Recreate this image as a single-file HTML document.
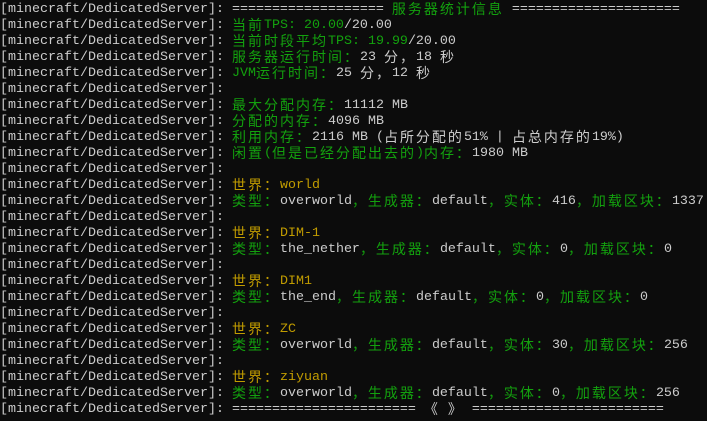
<!DOCTYPE html>
<html><head><meta charset="utf-8"><style>
html,body{margin:0;padding:0;background:#0c0c0c;width:707px;height:421px;overflow:hidden}
body{padding-top:2px;box-sizing:border-box;color:#cccccc;font-family:"Liberation Mono",monospace;font-size:13.333px;line-height:16px}
div{white-space:pre;height:16px;line-height:16px;overflow:visible}
b{font-weight:normal}
.g{color:#13a10e}.y{color:#c19c00}
i{font-style:normal;font-family:"Noto Sans CJK SC","WenQuanYi Zen Hei",sans-serif;font-size:14px;letter-spacing:2px;line-height:16px;display:inline-block;height:16px;vertical-align:top;position:relative;top:-1px}
</style></head><body>
<div>[minecraft/DedicatedServer]: =================== <b class="g"><i>服务器统计信息</i></b> =====================</div>
<div>[minecraft/DedicatedServer]: <b class="g"><i>当前</i>TPS: 20.00</b>/20.00</div>
<div>[minecraft/DedicatedServer]: <b class="g"><i>当前时段平均</i>TPS: 19.99</b>/20.00</div>
<div>[minecraft/DedicatedServer]: <b class="g"><i>服务器运行时间：</i></b>23 <i>分，</i>18 <i>秒</i></div>
<div>[minecraft/DedicatedServer]: <b class="g">JVM<i>运行时间：</i></b>25 <i>分，</i>12 <i>秒</i></div>
<div>[minecraft/DedicatedServer]:</div>
<div>[minecraft/DedicatedServer]: <b class="g"><i>最大分配内存：</i></b>11112 MB</div>
<div>[minecraft/DedicatedServer]: <b class="g"><i>分配的内存：</i></b>4096 MB</div>
<div>[minecraft/DedicatedServer]: <b class="g"><i>利用内存：</i></b>2116 MB (<i>占所分配的</i>51% | <i>占总内存的</i>19%)</div>
<div>[minecraft/DedicatedServer]: <b class="g"><i>闲置</i>(<i>但是已经分配出去的</i>)<i>内存：</i></b>1980 MB</div>
<div>[minecraft/DedicatedServer]:</div>
<div>[minecraft/DedicatedServer]: <b class="y"><i>世界：</i>world</b></div>
<div>[minecraft/DedicatedServer]: <b class="g"><i>类型：</i></b>overworld<b class="g"><i>，生成器：</i></b>default<b class="g"><i>，实体：</i></b>416<b class="g"><i>，加载区块：</i></b>1337</div>
<div>[minecraft/DedicatedServer]:</div>
<div>[minecraft/DedicatedServer]: <b class="y"><i>世界：</i>DIM-1</b></div>
<div>[minecraft/DedicatedServer]: <b class="g"><i>类型：</i></b>the_nether<b class="g"><i>，生成器：</i></b>default<b class="g"><i>，实体：</i></b>0<b class="g"><i>，加载区块：</i></b>0</div>
<div>[minecraft/DedicatedServer]:</div>
<div>[minecraft/DedicatedServer]: <b class="y"><i>世界：</i>DIM1</b></div>
<div>[minecraft/DedicatedServer]: <b class="g"><i>类型：</i></b>the_end<b class="g"><i>，生成器：</i></b>default<b class="g"><i>，实体：</i></b>0<b class="g"><i>，加载区块：</i></b>0</div>
<div>[minecraft/DedicatedServer]:</div>
<div>[minecraft/DedicatedServer]: <b class="y"><i>世界：</i>ZC</b></div>
<div>[minecraft/DedicatedServer]: <b class="g"><i>类型：</i></b>overworld<b class="g"><i>，生成器：</i></b>default<b class="g"><i>，实体：</i></b>30<b class="g"><i>，加载区块：</i></b>256</div>
<div>[minecraft/DedicatedServer]:</div>
<div>[minecraft/DedicatedServer]: <b class="y"><i>世界：</i>ziyuan</b></div>
<div>[minecraft/DedicatedServer]: <b class="g"><i>类型：</i></b>overworld<b class="g"><i>，生成器：</i></b>default<b class="g"><i>，实体：</i></b>0<b class="g"><i>，加载区块：</i></b>256</div>
<div>[minecraft/DedicatedServer]: ======================= <i>《</i> <i>》</i> ========================</div>
</body></html>
